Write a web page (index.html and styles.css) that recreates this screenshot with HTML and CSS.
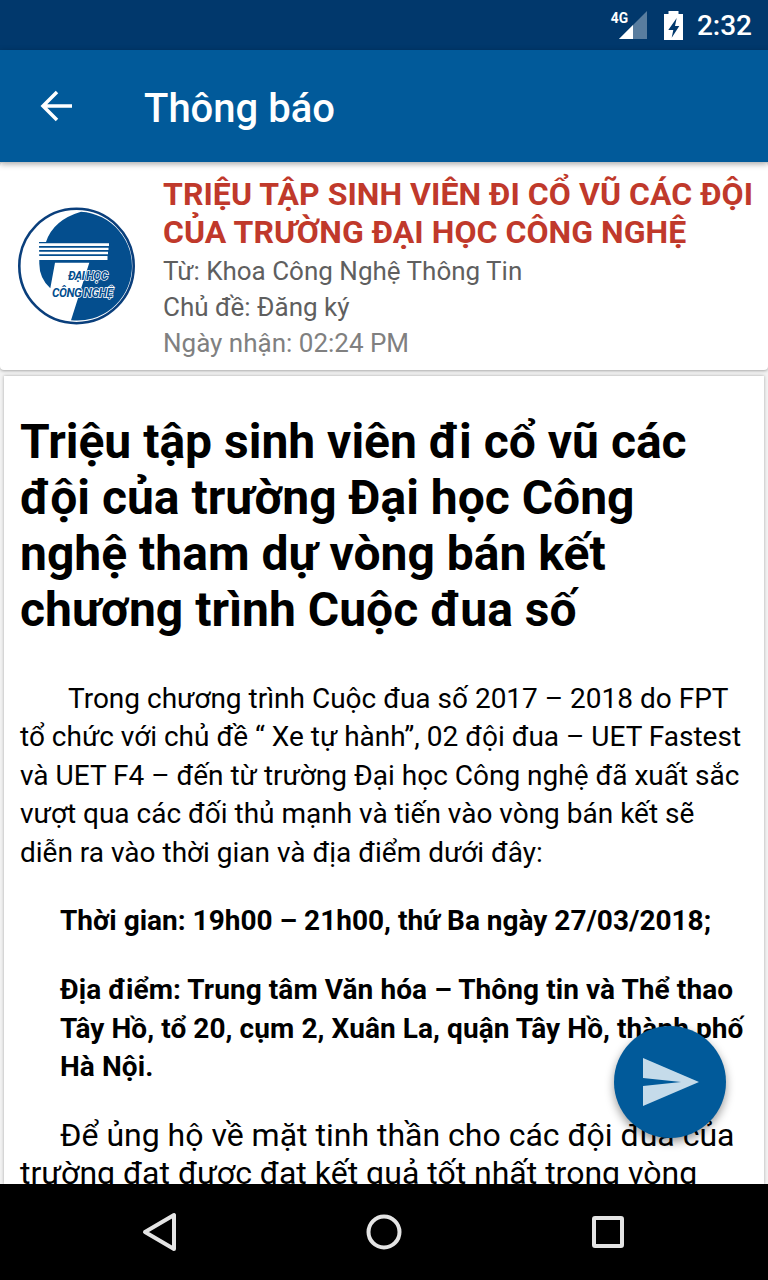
FILE: index.html
```html
<!DOCTYPE html>
<html lang="vi">
<head>
  <meta charset="utf-8">
  <title>Thông báo</title>
  <link rel="stylesheet" href="styles.css">
</head>
<body>
  <div class="screen">
    <div class="status-bar">
      <span class="net-label">4G</span>
      <svg class="signal" width="28" height="28" viewBox="0 0 28 28">
        <polygon points="28,0 28,28 0,28" fill="#fff" opacity="0.35"/>
        <polygon points="14,14 14,28 0,28" fill="#fff"/>
      </svg>
      <svg class="battery" width="19" height="29" viewBox="0 0 19 29">
        <path d="M4.500 0h10v3H19v26H0V3h4.500z" fill="#fff"/>
        <path d="M12.700 7 4.300 19H9.300L7.700 26.700 15.300 15H11Z" fill="#01386c"/>
      </svg>
      <span class="clock">2:32</span>
    </div>

    <header class="toolbar">
      <svg class="back" width="32" height="32" viewBox="0 0 32 32">
        <path d="M32 16H3M17 2 3 16l14 14" fill="none" stroke="#fff" stroke-width="3.500"/>
      </svg>
      <h1>Thông báo</h1>
    </header>

    <section class="summary">
      <svg class="logo" width="120" height="120" viewBox="0 0 120 120">
        <circle cx="59.500" cy="60" r="57.200" fill="#fff" stroke="#0a3f7c" stroke-width="2.600"/>
        <path d="M29 36Q36 14 64 5.700A54.500 54.500 0 1 1 54 114.200L72.300 56.700H38L33.300 82.300Q22 72 22.300 56.700L22 36Z" fill="#044e8e"/>
        <path d="M22 37.300h70V40H22zM22 41.700h69.500V44H22zM22 45.700h69v2.600H22zM22 50h68.500v4H22z" fill="#fff"/>
        <text class="logo-text" x="51" y="74" textLength="40">ĐẠI HỌC</text>
        <text class="logo-text" x="35" y="91" textLength="61">CÔNG NGHỆ</text>
      </svg>
      <div class="summary-text">
        <h2>TRIỆU TẬP SINH VIÊN ĐI CỔ VŨ CÁC ĐỘI CỦA TRƯỜNG ĐẠI HỌC CÔNG NGHỆ</h2>
        <p>Từ: Khoa Công Nghệ Thông Tin</p>
        <p>Chủ đề: Đăng ký</p>
        <p class="date">Ngày nhận: 02:24 PM</p>
      </div>
    </section>

    <article class="content">
      <h3>Triệu tập sinh viên đi cổ vũ các đội của trường Đại học Công nghệ tham dự vòng bán kết chương trình Cuộc đua số</h3>
      <p class="first">Trong chương trình Cuộc đua số 2017 – 2018 do FPT tổ chức với chủ đề “ Xe tự hành”, 02 đội đua – UET Fastest và UET F4 – đến từ trường Đại học Công nghệ đã xuất sắc vượt qua các đối thủ mạnh và tiến vào vòng bán kết sẽ diễn ra vào thời gian và địa điểm dưới đây:</p>
      <p class="note time">Thời gian: 19h00 – 21h00, thứ Ba ngày 27/03/2018;</p>
      <p class="note place">Địa điểm: Trung tâm Văn hóa – Thông tin và Thể thao Tây Hồ, tổ 20, cụm 2, Xuân La, quận Tây Hồ, thành phố Hà Nội.</p>
      <p class="second">Để ủng hộ về mặt tinh thần cho các đội đua của trường đạt được đạt kết quả tốt nhất trong vòng</p>
    </article>

    <button class="fab">
      <svg width="56" height="48" viewBox="0 0 56 48">
        <path d="M0 0 56 24 0 48V28L38 24 0 20Z" fill="#c5dbea"/>
      </svg>
    </button>

    <nav class="nav-bar">
      <svg width="36" height="40" viewBox="0 0 36 40">
        <path d="M32 3V37L3 20Z" fill="none" stroke="#e4e4e4" stroke-width="4" stroke-linejoin="round"/>
      </svg>
      <svg width="36" height="36" viewBox="0 0 36 36">
        <circle cx="18" cy="18" r="15.500" fill="none" stroke="#e4e4e4" stroke-width="4"/>
      </svg>
      <svg class="recents" width="32" height="32" viewBox="0 0 32 32">
        <rect x="2" y="2" width="28" height="28" rx="1" fill="none" stroke="#e4e4e4" stroke-width="4"/>
      </svg>
    </nav>
  </div>
</body>
</html>
```

FILE: styles.css
```css
* {
  box-sizing: border-box;
}

html, body {
  margin: 0;
  padding: 0;
}

body {
  font-family: Roboto, "Noto Sans", sans-serif;
  background: #f2f2f2;
}

.screen {
  position: relative;
  width: 768px;
  height: 1280px;
  overflow: hidden;
  display: flex;
  flex-direction: column;
  background: #f2f2f2;
}

/* status bar */
.status-bar {
  flex: 0 0 50px;
  display: flex;
  align-items: center;
  justify-content: flex-end;
  padding-right: 16px;
  background: #01386c;
  color: #fff;
}

.net-label {
  font-size: 15px;
  font-weight: 700;
  margin: -15px -10px 0 0;
  transform: scaleX(0.92);
}

.battery {
  margin-left: 17px;
}

.clock {
  font-size: 28px;
  font-weight: 500;
  margin-left: 14px;
}

/* toolbar */
.toolbar {
  flex: 0 0 112px;
  display: flex;
  align-items: center;
  padding-left: 40px;
  background: #015a9a;
  box-shadow: 0 2px 6px rgba(0, 0, 0, 0.35);
  z-index: 2;
}

.toolbar h1 {
  margin: 4px 0 0 72px;
  font-size: 40px;
  font-weight: 500;
  color: #fff;
}

.back {
  flex: none;
}

/* message summary card */
.summary {
  flex: 0 0 208px;
  display: flex;
  align-items: center;
  padding-left: 17px;
  background: #fff;
  border-radius: 4px;
  box-shadow: 0 1px 3px rgba(0, 0, 0, 0.3);
}

.logo {
  flex: none;
  margin-right: 26px;
}

.logo-text {
  font-size: 12px;
  font-weight: 700;
  font-style: italic;
  fill: #044e8e;
  stroke: #fff;
  stroke-width: 1.500px;
  paint-order: stroke;
}

.summary-text {
  padding-top: 4px;
}

.summary-text h2 {
  margin: 0 0 2px;
  font-size: 32px;
  line-height: 38px;
  font-weight: 700;
  letter-spacing: 0.05px;
  color: #c0392b;
}

.summary-text p {
  margin: 0;
  font-size: 26px;
  line-height: 36px;
  color: #5f5f5f;
}

.summary-text .date {
  color: #808080;
}

/* article */
.content {
  flex: 1;
  min-height: 0;
  overflow: hidden;
  margin: 6px 4px 0;
  padding: 38px 16px 0;
  background: #fff;
  box-shadow: 0 0 3px rgba(0, 0, 0, 0.3);
  color: #000;
}

.content h3 {
  margin: 0 0 42px;
  font-size: 48px;
  line-height: 56px;
  font-weight: 700;
}

.content p {
  margin: 0;
  font-size: 28px;
  line-height: 38.400px;
}

.first {
  text-indent: 48px;
}

.content .note {
  padding-left: 40px;
  font-weight: 700;
}

.content .time {
  margin-top: 30px;
}

.content .place {
  margin-top: 31px;
  letter-spacing: 0.08px;
}

.content .second {
  margin-top: 29px;
  font-size: 32px;
  text-indent: 40px;
}

/* floating button */
.fab {
  position: absolute;
  left: 614px;
  top: 1026px;
  width: 112px;
  height: 112px;
  padding: 0 0 0 2px;
  border: 0;
  border-radius: 50%;
  display: flex;
  align-items: center;
  justify-content: center;
  background: #015a9a;
  box-shadow: 0 4px 10px rgba(0, 0, 0, 0.4);
}

/* android nav */
.nav-bar {
  flex: 0 0 96px;
  display: flex;
  align-items: center;
  background: #000;
  position: relative;
  z-index: 3;
  padding-left: 142px;
  gap: 188px;
}

.recents {
  margin-left: 2px;
}
```
